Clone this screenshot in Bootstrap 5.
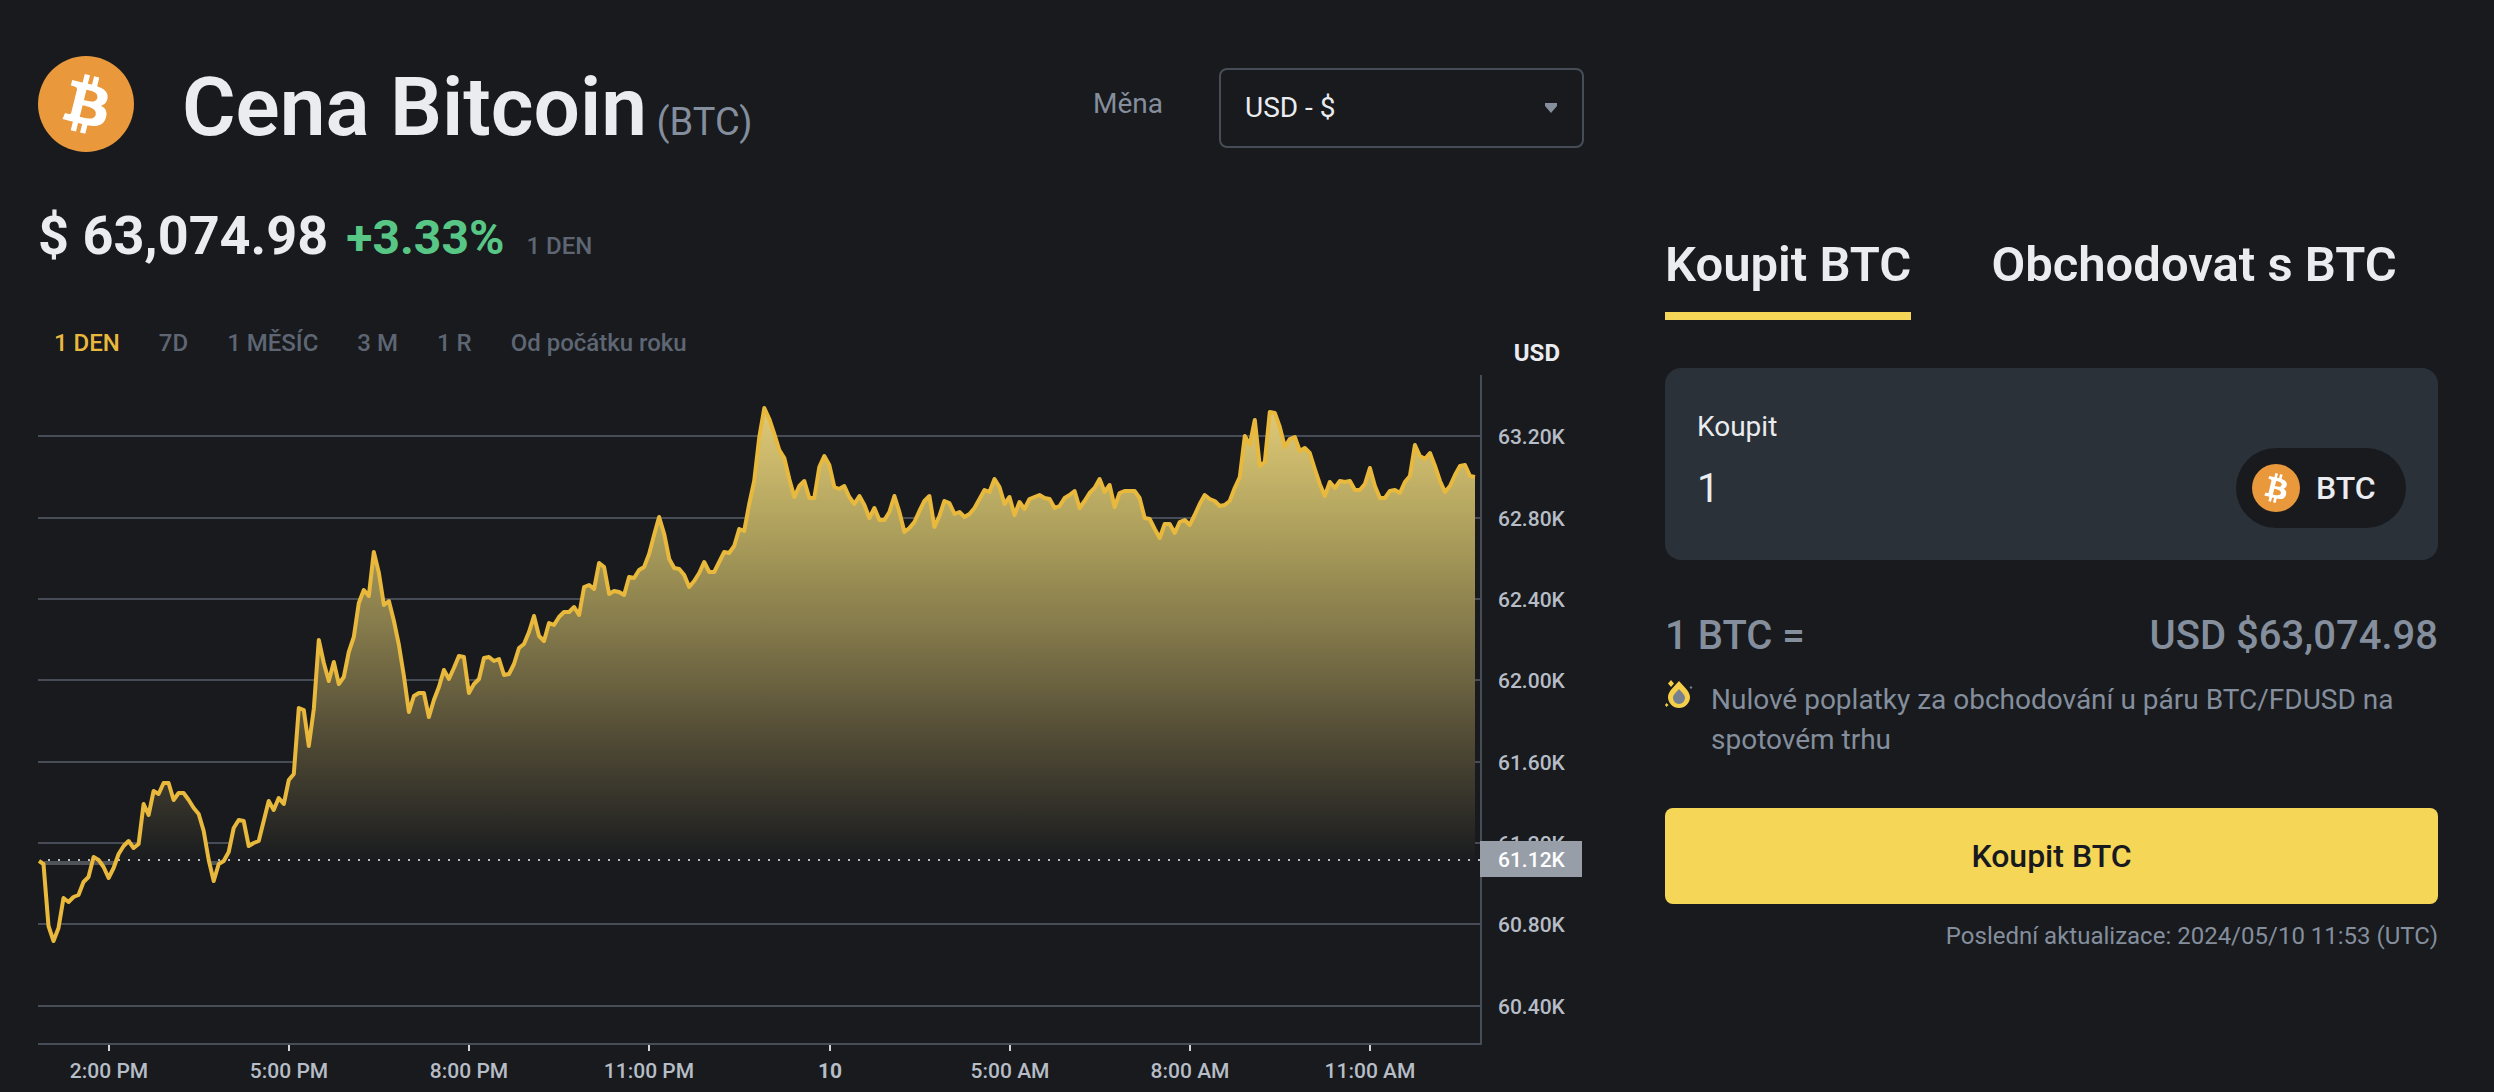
<!DOCTYPE html>
<html lang="cs">
<head>
<meta charset="utf-8">
<meta name="viewport" content="width=device-width, initial-scale=1">
<title>Cena Bitcoin (BTC)</title>
<link href="https://cdn.jsdelivr.net/npm/bootstrap@5.3.0/dist/css/bootstrap.min.css" rel="stylesheet">
<style>
  :root { --ink: #eaecef; --muted: #848e9c; --dim: #5e6673; --line: #474d57; --page: #181a1e; --gold: #f5d657; }
  body { background: var(--page); color: var(--ink); font-family: Roboto, "Noto Sans", sans-serif; }
  .price-page { display: grid; grid-template-columns: minmax(0, 2fr) minmax(0, 1fr); column-gap: 81px; padding: 56px 56px 0 38px; }
  .page-head { height: 96px; }
  .coin-logo { width: 96px; height: 96px; flex: none; }
  .coin-title { font-size: 82px; line-height: 100px; font-weight: 600; margin: 0 0 0 48px; padding-top: 6px; }
  .coin-title span { font-size: 38px; line-height: 1; font-weight: 400; color: var(--muted); }
  .fiat-label { font-size: 28px; line-height: 40px; color: var(--muted); }
  .fiat-select { width: 365px; height: 80px; border: 2px solid var(--line); border-radius: 8px; background-color: transparent; color: var(--ink); font-size: 28px; padding: 0 64px 0 24px;
    background-image: url("data:image/svg+xml,%3Csvg xmlns='http://www.w3.org/2000/svg' viewBox='0 0 14 10'%3E%3Cpath d='M1 0h12v3L7 10 1 3z' fill='%23848e9c'/%3E%3C/svg%3E"); background-size: 14px 10px; background-position: right 24px center; }
  .price-row { margin-top: 52px; line-height: 64px; }
  .price-now { font-size: 54px; font-weight: 700; }
  .price-change { font-size: 48px; font-weight: 700; color: #58c786; margin-left: 18px; }
  .price-span { font-size: 24px; font-weight: 500; color: var(--dim); margin-left: 22px; }
  .range-tabs { margin: 49px 24px 0 16px; gap: 39px; }
  .range-tabs button { font-size: 24px; line-height: 32px; font-weight: 500; color: var(--dim); background: none; border: 0; padding: 0; }
  .range-tabs button.active { color: #e8b93c; }
  .axis-unit { font-size: 24px; line-height: 32px; font-weight: 700; padding-top: 10px; }
  .chart-svg { display: block; width: 100%; height: auto; }
  .chart-svg text { font-size: 21px; font-weight: 500; fill: #b7bdc6; }
  .trade-panel { padding-top: 176px; }
  .trade-tabs { gap: 80px; }
  .trade-tabs button { font-size: 49px; line-height: 66px; font-weight: 600; color: var(--ink); background: none; border: 0; border-bottom: 8px solid transparent; padding: 0 0 14px; white-space: nowrap; }
  .trade-tabs button.active { border-bottom-color: var(--gold); }
  .amount-box { margin-top: 48px; height: 192px; background: #2b3139; border-radius: 16px; padding: 37px 32px 32px; }
  .amount-box label { font-size: 28px; line-height: 44px; }
  .amount-box input { background: none; border: 0; color: var(--ink); font-size: 40px; line-height: 56px; margin-top: 12px; padding: 0; outline: 0; }
  .coin-pill { width: 170px; height: 80px; flex: none; border-radius: 40px; background: var(--page); padding: 0 16px; gap: 16px; font-size: 32px; font-weight: 500; }
  .coin-pill svg { width: 48px; height: 48px; }
  .rate-row { margin-top: 48px; font-size: 40px; line-height: 56px; font-weight: 500; color: var(--muted); }
  .fee-note { margin-top: 16px; gap: 18px; font-size: 28px; line-height: 40px; color: var(--muted); }
  .fee-note svg { width: 28px; height: 28px; flex: none; }
  .buy-btn { margin-top: 48px; height: 96px; width: 100%; border: 0; border-radius: 8px; background: var(--gold); color: #181a20; font-size: 32px; font-weight: 500; }
  .updated { margin-top: 16px; font-size: 24px; line-height: 32px; color: var(--muted); text-align: right; }
</style>
</head>
<body>
<svg class="d-none" aria-hidden="true">
  <symbol id="btc" viewBox="0 0 32 32"><circle cx="16" cy="16" r="16" fill="#e9983c"/><path fill="#fff" d="M23.189 14.02c.314-2.096-1.283-3.223-3.465-3.975l.708-2.84-1.728-.43-.69 2.765c-.454-.114-.92-.22-1.385-.326l.695-2.783L15.596 6l-.708 2.839c-.376-.086-.746-.17-1.104-.26l.002-.009-2.384-.595-.46 1.846s1.283.294 1.256.312c.7.175.826.638.805 1.006l-.806 3.235c.048.012.11.03.18.057l-.183-.045-1.13 4.532c-.086.212-.303.531-.793.41.018.025-1.256-.313-1.256-.313l-.858 1.978 2.25.561c.418.105.828.215 1.231.318l-.715 2.872 1.727.43.708-2.84c.472.127.93.245 1.378.357l-.706 2.828 1.728.43.715-2.866c2.948.558 5.164.333 6.097-2.333.752-2.146-.037-3.385-1.588-4.192 1.13-.26 1.98-1.003 2.207-2.538zm-3.95 5.538c-.533 2.147-4.148.986-5.32.695l.95-3.805c1.172.293 4.929.872 4.37 3.11zm.535-5.569c-.487 1.953-3.495.96-4.47.717l.86-3.45c.975.243 4.118.696 3.61 2.733z"/></symbol>
</svg>
<main class="price-page">
  <section>
    <header class="page-head d-flex align-items-center">
      <svg class="coin-logo"><use href="#btc"/></svg>
      <h1 class="coin-title">Cena Bitcoin<span> (BTC)</span></h1>
      <div class="d-flex align-items-center ms-auto">
        <label class="fiat-label me-5" for="fiat">Měna</label>
        <select class="form-select fiat-select ms-2 mt-2" id="fiat"><option>USD - $</option></select>
      </div>
    </header>
    <div class="price-row d-flex align-items-baseline">
      <span class="price-now">$ 63,074.98</span>
      <span class="price-change">+3.33%</span>
      <span class="price-span">1 DEN</span>
    </div>
    <div class="range-tabs d-flex align-items-start">
      <button class="active" type="button">1 DEN</button>
      <button type="button">7D</button>
      <button type="button">1 MĚSÍC</button>
      <button type="button">3 M</button>
      <button type="button">1 R</button>
      <button type="button">Od počátku roku</button>
      <span class="axis-unit ms-auto">USD</span>
    </div>
    <svg class="chart-svg" viewBox="38 370 1546 720" role="img" aria-label="Graf ceny BTC v USD">
      <defs><linearGradient id="area" gradientUnits="userSpaceOnUse" x1="0" y1="409" x2="0" y2="865"><stop offset="0" stop-color="#e0ca77"/><stop offset=".28" stop-color="#ab9e5b"/><stop offset=".48" stop-color="#857a4b"/><stop offset=".73" stop-color="#504a35"/><stop offset="1" stop-color="#181a1e"/></linearGradient></defs>
      <path d="M38 437H1480M38 519H1480M38 600H1480M38 681H1480M38 763H1480M38 844H1480M38 925H1480M38 1007H1480M38 1045H1481" stroke="#474d57" stroke-width="2"/>
      <path id="price-area" fill="url(#area)"/>
      <path d="M44 864H114M208 864H220" stroke="#505358" stroke-width="4"/>
      <path d="M48 861H1480" stroke="#b7bdc6" stroke-width="2" stroke-dasharray="2 8"/>
      <path id="price-line" fill="none" stroke="#e8b93c" stroke-width="4" stroke-linejoin="round"/>
      <path d="M1481 376V1046" stroke="#474d57" stroke-width="2"/>
      <path d="M109 1046v6M289 1046v6M469 1046v6M649 1046v6M830 1046v6M1010 1046v6M1190 1046v6M1370 1046v6" stroke="#d0d4da" stroke-width="2"/>
      <g><text x="1498" y="445">63.20K</text><text x="1498" y="527">62.80K</text><text x="1498" y="608">62.40K</text><text x="1498" y="689">62.00K</text><text x="1498" y="771">61.60K</text><text x="1498" y="852">61.20K</text><text x="1498" y="933">60.80K</text><text x="1498" y="1015">60.40K</text></g>
      <path d="M1480 842h102v36h-102z" fill="#989ea8"/>
      <text x="1498" y="868" style="fill:#fff">61.12K</text>
      <g text-anchor="middle"><text x="109" y="1079">2:00 PM</text><text x="289" y="1079">5:00 PM</text><text x="469" y="1079">8:00 PM</text><text x="649" y="1079">11:00 PM</text><text x="830" y="1079" style="font-weight:700">10</text><text x="1010" y="1079">5:00 AM</text><text x="1190" y="1079">8:00 AM</text><text x="1370" y="1079">11:00 AM</text></g>
    </svg>
  </section>
  <section class="trade-panel">
    <div class="trade-tabs d-flex">
      <button class="active" type="button">Koupit BTC</button>
      <button type="button">Obchodovat s BTC</button>
    </div>
    <div class="amount-box d-flex align-items-end justify-content-between">
      <div class="d-flex flex-column align-self-start">
        <label for="amount">Koupit</label>
        <input id="amount" type="text" value="1">
      </div>
      <div class="coin-pill d-flex align-items-center"><svg><use href="#btc"/></svg>BTC</div>
    </div>
    <div class="rate-row d-flex justify-content-between"><span>1 BTC =</span><span>USD $63,074.98</span></div>
    <div class="fee-note d-flex">
      <svg viewBox="0 0 28 28"><path fill="#f5cf4a" d="M14 1c3 4 11 10 11 16a11 11 0 0 1-22 0C3 11 11 5 14 1zM6 0l3 3.500-3 3.500-3-3.500zM1.500 23l2 2-2 2-1.500-2z"/><path fill="#76808f" d="M14 9c2 3 6 5 6 9a6 6 0 0 1-12 0c0-4 4-6 6-9zM26 6l1.500 1.500L26 9l-1.500-1.500z"/></svg>
      <span>Nulové poplatky za obchodování u páru BTC/FDUSD na spotovém trhu</span>
    </div>
    <button class="buy-btn" type="button">Koupit BTC</button>
    <p class="updated mb-0">Poslední aktualizace: 2024/05/10 11:53 (UTC)</p>
  </section>
</main>
<script>
  // Price samples, one every five minutes, as chart heights
  const samples = [865,927,942,929,899,903,898,896,883,878,858,861,868,879,869,855,847,842,849,845,805,816,792,795,784,784,801,794,794,801,809,815,832,861,882,865,862,853,829,821,822,847,844,842,822,802,811,799,805,781,775,709,711,747,
    710,641,664,682,663,685,678,653,638,604,591,597,553,574,606,602,622,646,677,713,697,694,694,718,701,688,671,680,669,657,658,694,685,680,659,658,662,660,676,675,665,649,645,633,617,637,642,624,626,618,613,613,608,616,588,586,590,564,568,595,592,593,596,578,579,571,568,
    555,536,518,535,560,569,570,576,588,582,574,563,573,573,563,553,554,547,530,532,505,482,438,409,420,435,451,459,480,498,487,482,499,499,468,457,466,488,490,487,498,505,497,506,519,509,521,521,513,497,513,533,529,523,512,502,497,528,517,502,504,515,513,518,515,509,500,491,493,480,488,505,498,516,503,510,500,
    498,496,499,500,509,507,499,496,492,509,502,494,489,480,493,486,508,494,492,492,492,499,519,520,530,539,525,525,534,523,521,526,516,505,496,500,502,507,506,502,489,478,437,446,421,467,463,413,414,428,448,440,438,452,449,454,470,485,497,483,489,482,483,482,491,491,485,469,487,499,499,492,491,494,483,477,446,457,460,454,467,482,493,487,476,467,466,477,478];
  const step = (1475 - 43.5) / (samples.length - 1);
  const line = samples.map((y, i) => (43.5 + i * step).toFixed(1) + ' ' + y).join('L');
  document.getElementById('price-line').setAttribute('d', 'M39 862L' + line);
  document.getElementById('price-area').setAttribute('d', 'M39 862L' + line + 'V862H39Z');
</script>
<script src="https://cdn.jsdelivr.net/npm/bootstrap@5.3.0/dist/js/bootstrap.bundle.min.js"></script>
</body>
</html>
